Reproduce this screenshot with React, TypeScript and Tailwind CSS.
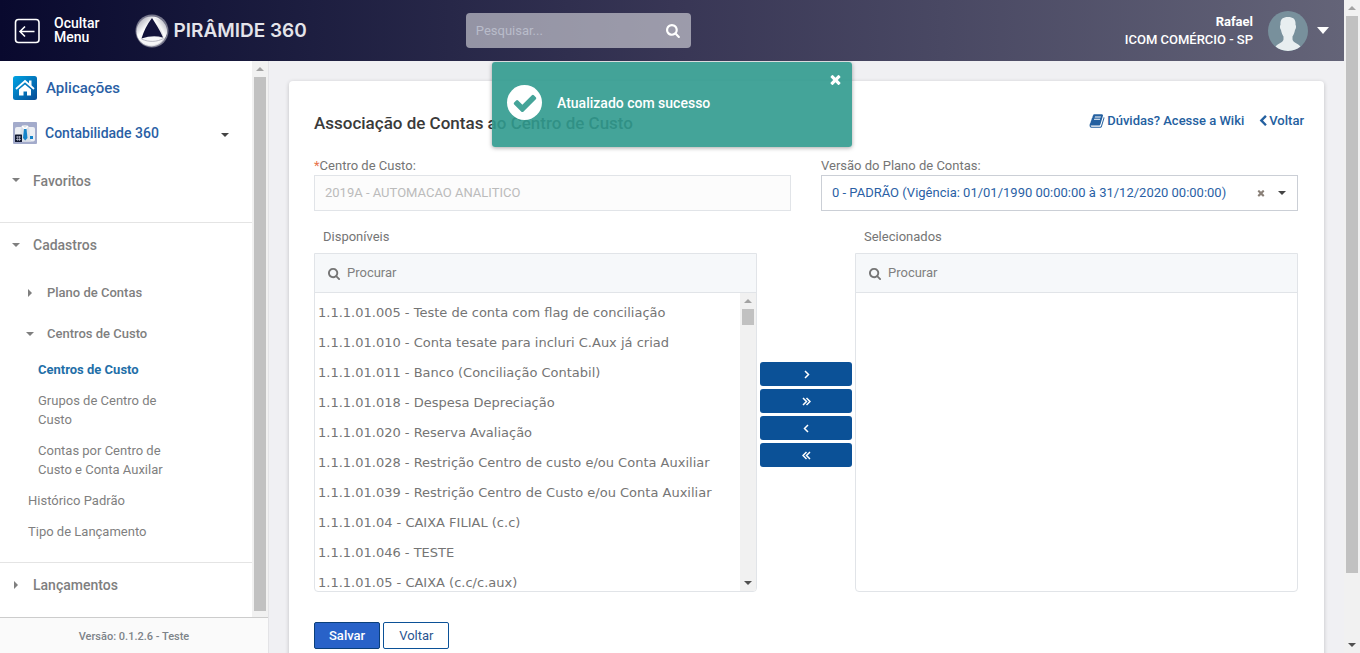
import React from "react";

const PATHS = {
  search:
    "M1152 832q0-185-131.5-316.5t-316.5-131.5-316.5 131.5-131.5 316.5 131.5 316.5 316.5 131.5 316.5-131.5 131.5-316.5zm512 832q0 52-38 90t-90 38q-54 0-90-38l-343-342q-179 124-399 124-143 0-273.5-55.5t-225-150-150-225-55.5-273.5 55.5-273.5 150-225 225-150 273.5-55.5 273.5 55.5 225 150 150 225 55.5 273.5q0 220-124 399l343 343q37 37 37 90z",
  times:
    "M1490 1322q0 40-28 68l-136 136q-28 28-68 28t-68-28l-294-294-294 294q-28 28-68 28t-68-28l-136-136q-28-28-28-68t28-68l294-294-294-294q-28-28-28-68t28-68l136-136q28-28 68-28t68 28l294 294 294-294q28-28 68-28t68 28l136 136q28 28 28 68t-28 68l-294 294 294 294q28 28 28 68z",
  chevronLeft:
    "M1427 301l-531 531 531 531q19 19 19 45t-19 45l-166 166q-19 19-45 19t-45-19l-742-742q-19-19-19-45t19-45l742-742q19-19 45-19t45 19l166 166q19 19 19 45t-19 45z",
  book: "M1703 478q40 57 18 129l-275 906q-19 64-76.5 107.5t-122.5 43.5h-923q-77 0-148.5-53.5t-99.5-131.5q-24-67-2-127 0-4 3-27t4-37q1-8-3-21.5t-3-19.5q2-11 8-21t16.5-23.5 16.5-23.5q23-38 45-91.5t30-91.5q3-10 .5-30t-.5-28q3-11 17-28t17-23q21-36 42-92t25-90q1-9-2.5-32t.5-28q4-13 22-30.5t22-22.5q19-26 42.5-84.5t27.5-96.5q1-8-3-25.5t-2-26.5q2-8 9-18t18-23 17-21q8-12 16.5-30.5t15-35 16-36 19.5-32 26.5-23.5 36-11.5 47.5 5.5l-1 3q38-9 51-9h761q74 0 114 56t18 130l-274 906q-36 119-71.5 153.5t-128.5 34.5h-869q-27 0-38 15-11 16-1 43 24 70 144 70h923q29 0 56-15.5t35-41.5l300-987q7-22 5-57 38 15 59 43zm-1064 2q-4 13 2 22.5t20 9.5h608q13 0 25.5-9.5t16.5-22.5l21-64q4-13-2-22.5t-20-9.5h-608q-13 0-25.5 9.5t-16.5 22.5zm-83 256q-4 13 2 22.5t20 9.5h608q13 0 25.5-9.5t16.5-22.5l21-64q4-13-2-22.5t-20-9.5h-608q-13 0-25.5 9.5t-16.5 22.5z",
  check:
    "M1671 566q0 40-28 68l-724 724-136 136q-28 28-68 28t-68-28l-136-136-362-362q-28-28-28-68t28-68l136-136q28-28 68-28t68 28l294 295 656-657q28-28 68-28t68 28l136 136q28 28 28 68z",
};

function Icon({ name, className }: { name: keyof typeof PATHS; className: string }) {
  return (
    <svg viewBox="0 0 1792 1792" fill="currentColor" className={className} aria-hidden="true">
      <path d={PATHS[name]} />
    </svg>
  );
}

const CARETS = { up: "M0 5L4 1L8 5Z", down: "M0 1L8 1L4 5Z", right: "M2 -1L6 3L2 7Z" };

function Caret({ dir, className }: { dir: keyof typeof CARETS; className: string }) {
  return (
    <svg viewBox="0 -1 8 8" fill="currentColor" className={className} aria-hidden="true">
      <path d={CARETS[dir]} />
    </svg>
  );
}

function Scrollbar({ thumb, down = true }: { thumb: string; down?: boolean }) {
  return (
    <div className="flex w-4 shrink-0 flex-col items-center bg-[#f1f1f1]" aria-hidden="true">
      <div className="flex h-4 shrink-0 items-center justify-center">
        <Caret dir="up" className="size-2 text-[#a3a3a3]" />
      </div>
      <div className="flex min-h-0 w-full flex-1 flex-col items-center">
        <div className={`w-3 bg-[#c1c1c1] ${thumb}`} />
      </div>
      {down && (
        <div className="flex h-4 shrink-0 items-center justify-center">
          <Caret dir="down" className="size-2 text-[#505050]" />
        </div>
      )}
    </div>
  );
}

function Header() {
  return (
    <header className="flex h-[61px] shrink-0 items-center bg-linear-to-r from-[#09092e] via-[#383655] to-[#646478] text-white">
      <button type="button" className="ml-[14px] flex items-center gap-[14px] text-left text-sm leading-[14px] font-medium">
        <svg viewBox="0 0 26 26" className="size-[26px]" fill="none" stroke="currentColor" aria-hidden="true">
          <rect x="1.5" y="1.500" width="23.500" height="23" rx="3" strokeWidth="1.6" />
          <path d="M20.500 13.500H6M11 8.500L6 13.500L11 18.500" strokeWidth="1.6" />
        </svg>
        <span className="pb-px">
          Ocultar
          <br />
          Menu
        </span>
      </button>
      <a href="#inicio" className="ml-9 flex items-center gap-1">
        <svg viewBox="0 0 34 34" className="size-[34px]" aria-hidden="true">
          <defs>
            <linearGradient id="bandA" x1="0" y1="0" x2="1" y2="1">
              <stop offset="0" stopColor="#8d8d9e" />
              <stop offset=".35" stopColor="#ffffff" />
              <stop offset="1" stopColor="#c9c9d2" />
            </linearGradient>
            <linearGradient id="bandB" x1="1" y1="0" x2="0" y2="1">
              <stop offset="0" stopColor="#9d9dac" />
              <stop offset=".5" stopColor="#ffffff" />
              <stop offset="1" stopColor="#b4b4c0" />
            </linearGradient>
          </defs>
          <circle cx="17" cy="17" r="16.500" fill="#9a9aaa" opacity=".75" />
          <circle cx="16.500" cy="17.500" r="15" fill="url(#bandA)" />
          <path d="M17.500 4C25 3 33 10 32 19C31 22 30 24 28.500 25C28 17 24 9 17.500 4Z" fill="url(#bandB)" />
          <path d="M28.500 24.500C24 32 13 34 6.500 27C6 26 6 25 6.500 24Q17 21 28.500 24.500Z" fill="#f7f7f9" />
          <path d="M28.500 24.500C22 28 14 28.500 6.500 25" fill="none" stroke="#a8a8b6" strokeWidth=".8" />
          <path d="M17 4C20 9 25 16 28 23.500Q18 20.500 6.500 24.500Q10 13 17 4Z" fill="#12123a" />
        </svg>
        <span className="pt-px font-['Inter'] text-[19px] font-semibold text-[#e4e4ea]">PIRÂMIDE 360</span>
      </a>
      <form className="mr-auto ml-[159px] flex h-[35px] w-[225px] items-center rounded bg-white/50 px-[10px]">
        <input
          type="text"
          aria-label="Pesquisar"
          placeholder="Pesquisar..."
          className="min-w-0 flex-1 bg-transparent text-[13px] outline-none placeholder:text-[#b9bcca]"
        />
        <button type="button" aria-label="Pesquisar">
          <Icon name="search" className="size-[15px]" />
        </button>
      </form>
      <div className="text-right text-[13px] leading-[18px] font-medium">
        <div className="font-bold">Rafael</div>
        <div>ICOM COMÉRCIO - SP</div>
      </div>
      <button type="button" aria-label="Menu do usuário" className="mr-[15px] ml-[15px] flex items-center gap-[9px]">
        <svg viewBox="0 0 40 40" className="size-10" aria-hidden="true">
          <circle cx="20" cy="20" r="20" fill="#78909c" />
          <path
            d="M20 6C25.500 6 28 8.500 27.500 14C28.500 14.500 28 18 27 19C26.500 22 25.500 24 24.500 25.500V28.500C25 31.500 30 32.500 32.500 35.600A20 20 0 0 1 7.500 35.600C10 32.500 15 31.500 15.500 28.500V25.500C14.500 24 13.500 22 13 19C12 18 11.500 14.500 12.500 14C12 8.500 14.500 6 20 6Z"
            fill="#e8eef0"
          />
        </svg>
        <svg viewBox="0 0 12 7" className="h-[7px] w-3" fill="currentColor" aria-hidden="true">
          <path d="M0 0H12L6 7Z" />
        </svg>
      </button>
    </header>
  );
}

function Sidebar() {
  return (
    <aside className="flex w-[269px] shrink-0 flex-col border-r border-[#e3e3e6] bg-white">
      <div className="flex min-h-0 flex-1">
        <nav className="min-w-0 flex-1 overflow-hidden font-medium text-[#7f7f7f]">
          <a href="#aplicacoes" className="mt-[15px] flex h-6 items-center gap-[9px] pl-[13px] text-[15px] text-[#2a5fa5]">
            <svg viewBox="0 0 24 24" className="size-6" aria-hidden="true">
              <defs>
                <linearGradient id="home" x1="0" y1="0" x2="1" y2="1">
                  <stop offset="0" stopColor="#00a4e4" />
                  <stop offset="1" stopColor="#064a94" />
                </linearGradient>
              </defs>
              <rect width="24" height="24" rx="2.500" fill="url(#home)" />
              <path d="M3.500 12.500L12 5L20.500 12.500" fill="none" stroke="#fff" strokeWidth="1.800" strokeLinecap="round" />
              <path d="M16 4.500H18.500V10L16 8Z" fill="#fff" />
              <path d="M6 13.500L12 8.500L18 13.500V19.500H14V15.500H10.500V19.500H6Z" fill="#fff" />
            </svg>
            Aplicações
          </a>
          <a href="#contabilidade" className="mt-[22px] flex h-[22px] items-center pl-[13px] text-sm text-[#2a5fa5]">
            <svg viewBox="0 0 24 22" className="h-[22px] w-6" aria-hidden="true">
              <rect width="24" height="22" rx="1" fill="#a3abcb" />
              <rect x="2" y="5" width="20" height="14.500" rx="2" fill="#eceff4" />
              <path d="M7.500 8Q8 3 12 3Q16 3 16.500 8L18 19.500H6.500Z" fill="#dbe0e8" />
              <path d="M9 4L12 7L15 4" fill="none" stroke="#fff" strokeWidth="1.500" />
              <path d="M11 7H13.500L14.500 16L12.200 18.500L10 16Z" fill="#1583c9" />
              <rect x="2" y="12.500" width="7" height="7.500" rx=".5" fill="#101830" />
              <path d="M3 15H8M3 17.500H8M4.700 14V19M6.500 14V19" stroke="#d8dcec" strokeWidth=".6" />
              <rect x="17" y="14" width="3" height="3" fill="#1583c9" />
            </svg>
            <span className="ml-2 flex-1">Contabilidade 360</span>
            <Caret dir="down" className="mt-1 mr-[23px] size-2 text-[#444]" />
          </a>

          <section className="mt-[18px] flex h-[61px] items-start border-b border-[#e4e4e4] text-sm leading-[38px]">
            <Caret dir="down" className="mt-[14px] ml-3 size-2" />
            <span className="ml-[13px]">Favoritos</span>
          </section>

          <section className="border-b border-[#e4e4e4] pb-[21px]">
            <button type="button" className="flex h-11 items-center pl-3 text-sm">
              <Caret dir="down" className="mr-[13px] size-2" />
              Cadastros
            </button>
            <button type="button" className="mt-1 flex h-11 items-center pl-[26px] text-[13px]">
              <Caret dir="right" className="mr-[13px] size-2" />
              Plano de Contas
            </button>
            <button type="button" className="flex h-[38px] items-center pl-[26px] text-[13px]">
              <Caret dir="down" className="mr-[13px] size-2" />
              Centros de Custo
            </button>
            <ul className="mt-[7px] w-[180px] space-y-3 pl-[38px] text-[13px] leading-[19px] font-normal">
              <li>
                <a href="#centros" className="font-bold text-[#1f6fa8]">
                  Centros de Custo
                </a>
              </li>
              <li>
                <a href="#grupos">Grupos de Centro de Custo</a>
              </li>
              <li>
                <a href="#contas">Contas por Centro de Custo e Conta Auxilar</a>
              </li>
            </ul>
            <ul className="mt-3 space-y-3 pl-7 text-[13px] leading-[19px] font-normal">
              <li>
                <a href="#historico">Histórico Padrão</a>
              </li>
              <li>
                <a href="#tipo">Tipo de Lançamento</a>
              </li>
            </ul>
          </section>

          <button type="button" className="flex h-11 items-center pl-3 text-sm">
            <Caret dir="right" className="mr-[13px] size-2" />
            Lançamentos
          </button>
        </nav>
        <Scrollbar thumb="min-h-0 flex-1 mb-[6px]" down={false} />
      </div>
      <footer className="h-9 border-t border-[#ccc] bg-[#fafafa] text-center text-[11px] leading-[37px] font-medium text-[#7d8389]">
        Versão: 0.1.2.6 - Teste
      </footer>
    </aside>
  );
}

const ACCOUNTS = [
  "1.1.1.01.005 - Teste de conta com flag de conciliação",
  "1.1.1.01.010 - Conta tesate para incluri C.Aux já criad",
  "1.1.1.01.011 - Banco (Conciliação Contabil)",
  "1.1.1.01.018 - Despesa Depreciação",
  "1.1.1.01.020 - Reserva Avaliação",
  "1.1.1.01.028 - Restrição Centro de custo e/ou Conta Auxiliar",
  "1.1.1.01.039 - Restrição Centro de Custo e/ou Conta Auxiliar",
  "1.1.1.01.04 - CAIXA FILIAL (c.c)",
  "1.1.1.01.046 - TESTE",
  "1.1.1.01.05 - CAIXA (c.c/c.aux)",
];

function PickList({ title, items }: { title: string; items: string[] }) {
  return (
    <section className="min-w-0 flex-1">
      <h2 className="h-[26px] pl-[9px] leading-5">{title}</h2>
      <div className="overflow-hidden rounded-b border border-[#e1e4e8]">
        <label className="flex h-[39px] items-center gap-[6px] border-b border-[#e1e4e8] bg-[#f6f8fa] pl-[13px]">
          <Icon name="search" className="size-[13px]" />
          <input
            type="text"
            aria-label={`Procurar em ${title}`}
            placeholder="Procurar"
            className="min-w-0 flex-1 bg-transparent outline-none placeholder:text-[#808080]"
          />
        </label>
        <div className="flex h-[298px]">
          <ul className="min-w-0 flex-1 overflow-hidden pt-[5px] pl-[3px] font-['DejaVu_Sans'] leading-[30px] whitespace-nowrap">
            {items.map((item) => (
              <li key={item}>{item}</li>
            ))}
          </ul>
          {items.length > 0 && <Scrollbar thumb="h-4" />}
        </div>
      </div>
    </section>
  );
}

const MOVES = [
  { label: "Adicionar", d: "M3 1L6.500 4.500L3 8" },
  { label: "Adicionar todos", d: "M1 1L4.500 4.500L1 8M4.500 1L8 4.500L4.500 8" },
  { label: "Remover", d: "M6 1L2.500 4.500L6 8" },
  { label: "Remover todos", d: "M4.500 1L1 4.500L4.500 8M8 1L4.500 4.500L8 8" },
];

function Toast() {
  return (
    <div
      role="status"
      className="absolute top-px left-[223px] flex h-[85px] w-[360px] items-center rounded-[3px] bg-[#309a8e]/90 pb-1 pl-[15px] text-white shadow-[0_1px_4px_rgba(0,0,0,0.35)]"
    >
      <span className="flex size-[35px] items-center justify-center rounded-full bg-white text-[#45a499]">
        <Icon name="check" className="size-[26px]" />
      </span>
      <span className="ml-[15px] text-sm font-medium">Atualizado com sucesso</span>
      <button type="button" aria-label="Fechar" className="absolute top-[10px] right-[9px]">
        <Icon name="times" className="size-[15px]" />
      </button>
    </div>
  );
}

function Content() {
  return (
    <main className="relative min-w-0 flex-1 overflow-hidden bg-[#f0f0f3] px-5 pt-5">
      <div className="rounded-t bg-white pt-[25px] pr-[26px] pb-10 pl-[25px] text-[13px] text-[#757575] shadow-[0_1px_4px_rgba(0,0,0,0.2)]">
        <div className="flex h-9 items-center justify-between">
          <h1 className="text-[17px] font-medium text-[#3a3a3a]">Associação de Contas ao Centro de Custo</h1>
          <div className="-mr-[6px] flex items-center gap-[13px] pb-[7px] font-medium text-[#2460a0]">
            <a href="#wiki" className="flex items-center gap-[2px]">
              <Icon name="book" className="size-4" />
              Dúvidas? Acesse a Wiki
            </a>
            <a href="#voltar" className="flex items-center">
              <Icon name="chevronLeft" className="size-3" />
              Voltar
            </a>
          </div>
        </div>

        <div className="mt-[15px] grid grid-cols-2 gap-[30px]">
          <div>
            <label htmlFor="centro" className="block leading-[18px]">
              <span className="text-[#e8734a]">*</span>Centro de Custo:
            </label>
            <input
              id="centro"
              disabled
              defaultValue="2019A - AUTOMACAO ANALITICO"
              className="h-9 w-full border border-[#e1e4e8] bg-[#fcfcfc] px-[10px] pb-px text-[#bbb]"
            />
          </div>
          <div>
            <label htmlFor="versao" className="block leading-[18px]">
              Versão do Plano de Contas:
            </label>
            <div className="flex h-9 items-center border border-[#cbcfd6]">
              <select id="versao" className="h-full min-w-0 flex-1 appearance-none bg-white pl-[10px] text-[#2a5fa5]">
                <option>0 - PADRÃO (Vigência: 01/01/1990 00:00:00 à 31/12/2020 00:00:00)</option>
              </select>
              <button type="button" aria-label="Limpar" className="text-[#8a8078]">
                <Icon name="times" className="size-[10px]" />
              </button>
              <Caret dir="down" className="mr-[11px] ml-3 size-2 text-[#444]" />
            </div>
          </div>
        </div>

        <div className="mt-4 flex gap-[3px]">
          <PickList title="Disponíveis" items={ACCOUNTS} />
          <div className="flex w-[92px] flex-col justify-center gap-[3px] pt-[10px]">
            {MOVES.map((move) => (
              <button
                key={move.label}
                type="button"
                aria-label={move.label}
                className="flex h-6 items-center justify-center rounded-[3px] bg-[#0b5197] text-white"
              >
                <svg viewBox="0 0 9 9" className="size-[9px]" fill="none" stroke="currentColor" strokeWidth="1.5" aria-hidden="true">
                  <path d={move.d} />
                </svg>
              </button>
            ))}
          </div>
          <PickList title="Selecionados" items={[]} />
        </div>

        <div className="mt-[30px] flex gap-[3px]">
          <button type="button" className="h-[27px] rounded-[2px] border border-[#0b3f7a] bg-[#2962c8] px-[14px] font-medium text-white">
            Salvar
          </button>
          <button type="button" className="h-[27px] rounded-[2px] border border-[#0b5197] bg-white px-[15px] text-[#2a5590]">
            Voltar
          </button>
        </div>
      </div>
      <Toast />
    </main>
  );
}

export default function App() {
  return (
    <div className="flex h-screen overflow-hidden bg-[#f0f0f3] font-['Roboto',sans-serif]">
      <div className="flex min-w-0 flex-1 flex-col">
        <Header />
        <div className="flex min-h-0 flex-1">
          <Sidebar />
          <Content />
        </div>
      </div>
      <Scrollbar thumb="h-[calc(90%-2px)]" />
    </div>
  );
}
